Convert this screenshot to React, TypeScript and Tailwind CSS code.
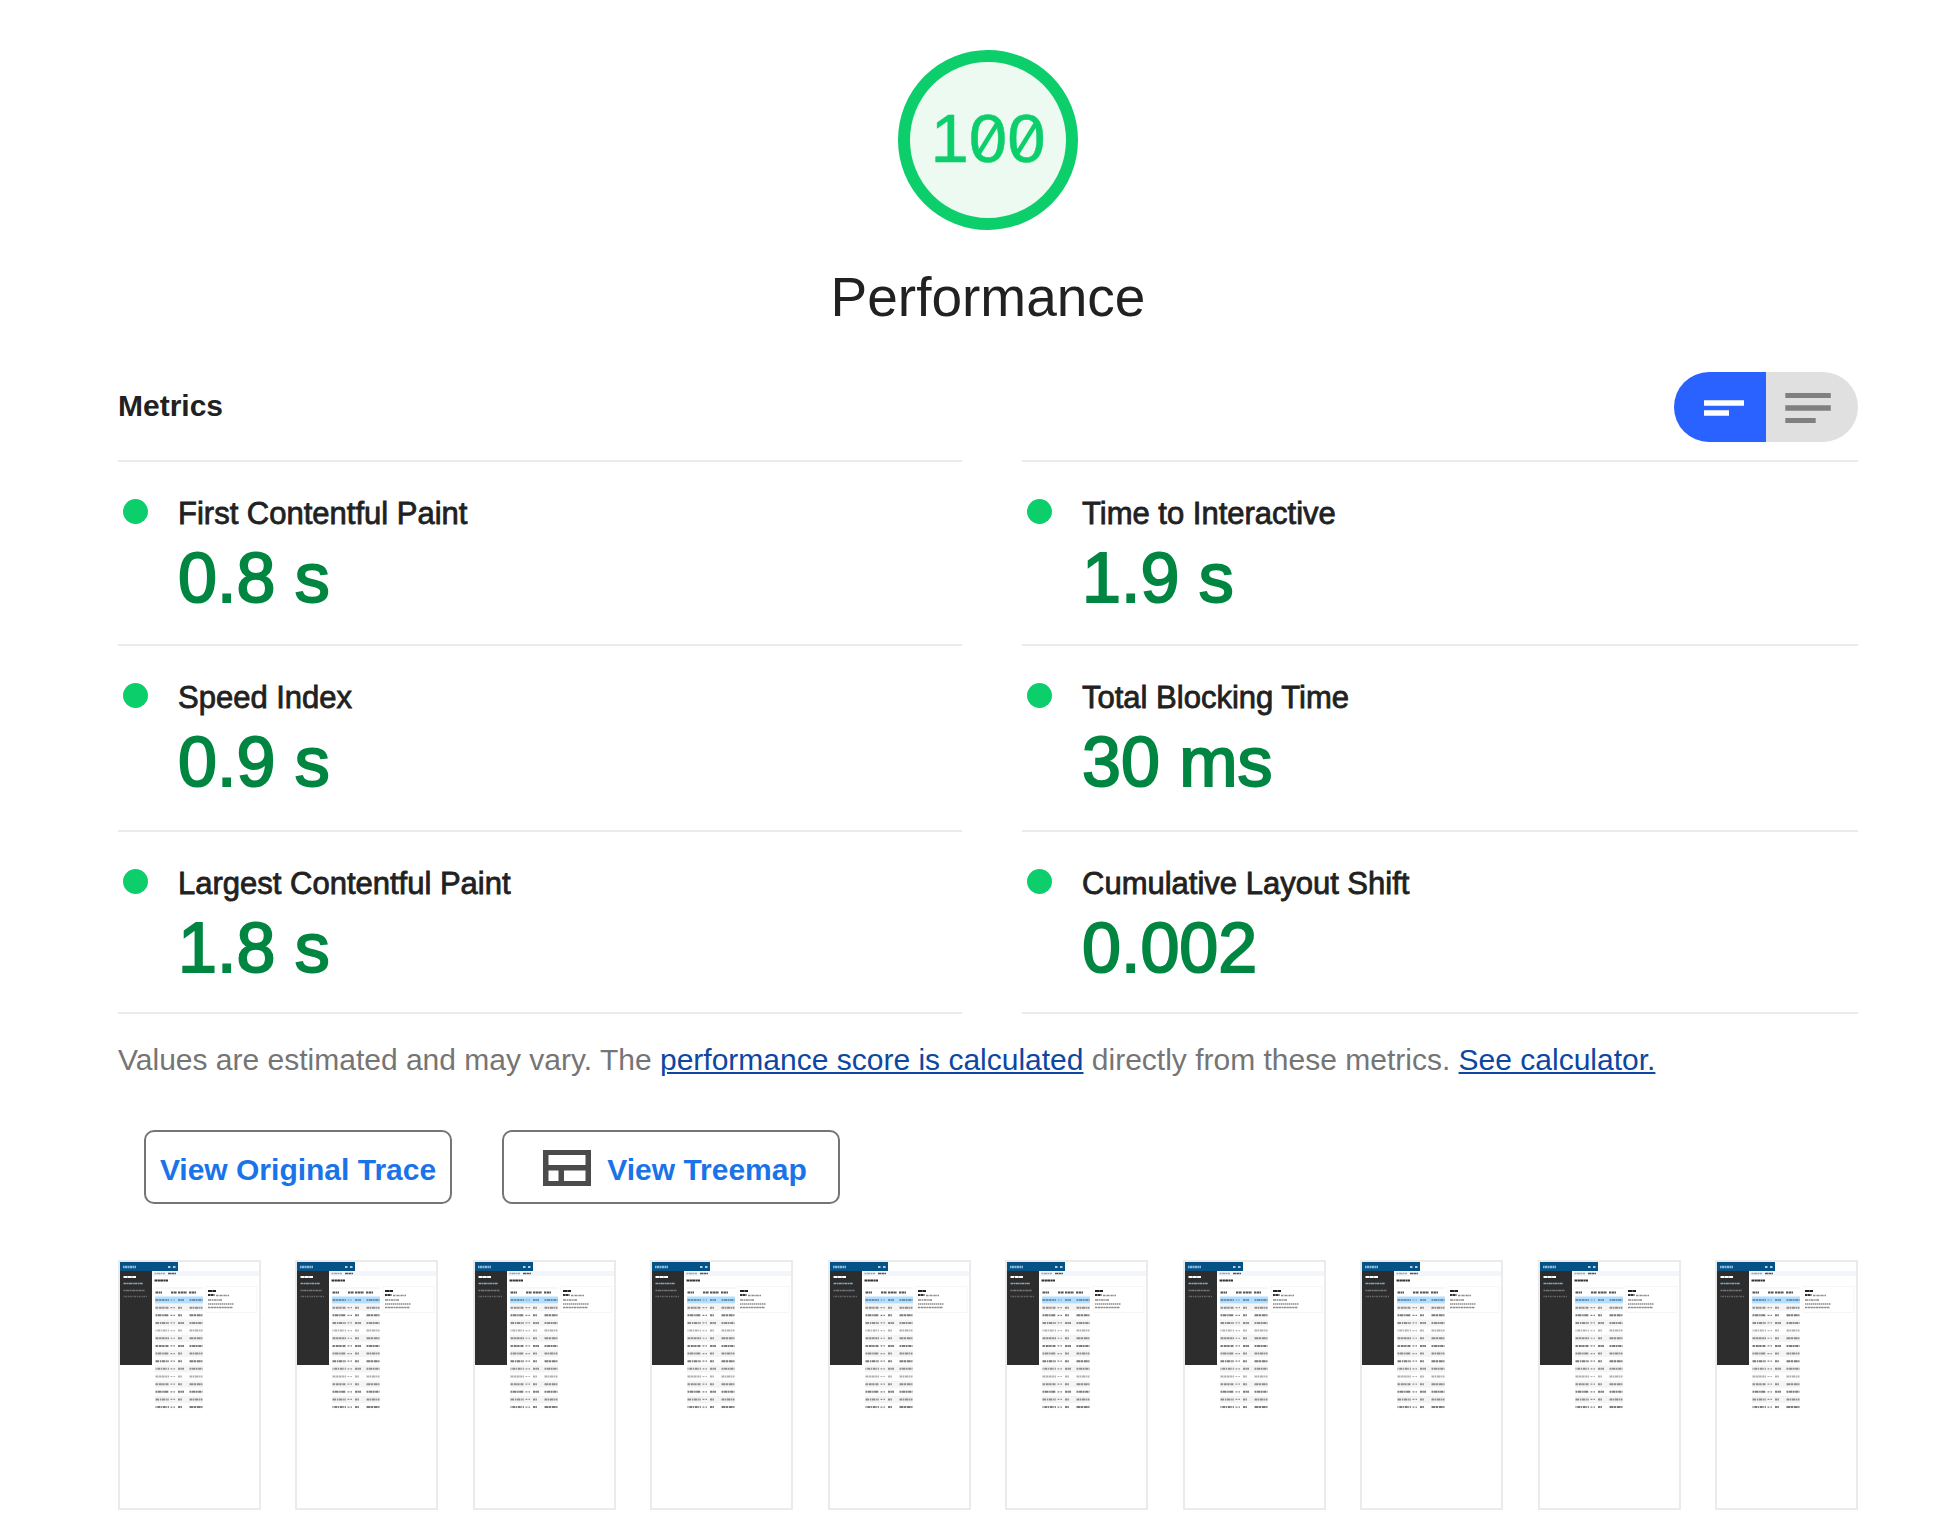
import { useState } from "react";

type Metric = { label: string; value: string };

const leftMetrics: Metric[] = [
  { label: "First Contentful Paint", value: "0.8 s" },
  { label: "Speed Index", value: "0.9 s" },
  { label: "Largest Contentful Paint", value: "1.8 s" },
];

const rightMetrics: Metric[] = [
  { label: "Time to Interactive", value: "1.9 s" },
  { label: "Total Blocking Time", value: "30 ms" },
  { label: "Cumulative Layout Shift", value: "0.002" },
];

function ScoreGauge() {
  return (
    <div className="relative flex size-[180px] items-center justify-center rounded-full border-12 border-[#0cce6b] bg-[#edfaf1] pb-1">
      <span className="text-[69px] leading-none text-[#0cce6b] [-webkit-text-stroke:0.5px_#0cce6b]">100</span>
      {/* slashes of the two zeros */}
      <svg className="absolute inset-0 size-full" viewBox="0 0 156 156" fill="none" stroke="#0cce6b" strokeWidth="4.500" aria-hidden="true">
        <path d="M69 91 L87 62 M107.500 91 L125.500 62" />
      </svg>
    </div>
  );
}

function ViewToggle() {
  const [expanded, setExpanded] = useState(false);
  return (
    <div className="flex h-[70px] w-[184px] overflow-hidden rounded-full">
      <button
        type="button"
        aria-label="Show metric values"
        aria-pressed={!expanded}
        onClick={() => setExpanded(false)}
        className="flex-1 bg-[#2962ff]"
      >
        <svg viewBox="0 0 92 70" fill="#ffffff" aria-hidden="true">
          <path d="M30 28.3h40v5.4H30zM30 38.3h25v5.4H30z" />
        </svg>
      </button>
      <button
        type="button"
        aria-label="Show metric descriptions"
        aria-pressed={expanded}
        onClick={() => setExpanded(true)}
        className="flex-1 bg-[#e0e0e0]"
      >
        <svg viewBox="0 0 92 70" fill="#808080" aria-hidden="true">
          <path d="M19.3 21h45.5v5H19.3zM19.3 33.3h45.5v5.4H19.3zM19.3 46h30.4v5H19.3z" />
        </svg>
      </button>
    </div>
  );
}

function MetricColumn({ metrics }: { metrics: Metric[] }) {
  return (
    <div className="grid grid-rows-[184px_186px_182px] border-b-2 border-[#ebebeb]">
      {metrics.map((m) => (
        <div key={m.label} className="flex border-t-2 border-[#ebebeb] pt-8 pl-[5px]">
          <span className="mt-[5px] mr-[30px] size-[25px] shrink-0 rounded-full bg-[#0cce6b]" />
          <div>
            <div className="text-[31px] leading-[40px] text-[#212121] [-webkit-text-stroke:0.8px_#212121]">{m.label}</div>
            <div className="mt-2 text-[70px] leading-[72px] text-[#018642] [-webkit-text-stroke:2px_#018642]">{m.value}</div>
          </div>
        </div>
      ))}
    </div>
  );
}

function TreemapIcon() {
  return (
    <svg className="h-9 w-12" viewBox="0 0 48 36" fill="#4b4b4b" aria-hidden="true">
      <path fillRule="evenodd" d="M0 0h48v36H0zM5.5 5v10h37V5zM5.5 20.5V31H15.500V20.5zM21 20.5V31h21.500V20.5z" />
    </svg>
  );
}

const rowCount = 15;
const firstDashes = ["3 .6 2 .5", "2.4 .8 3 .5", "1.5 .5 4 .7", "3.5 .8 1.5 .6", "1 .8 3 .6"];
const lastDashes = ["2 .6 3 .5", "3 .5 1.4 .6", "4 .5 2 .7"];

function PageShot() {
  return (
    <svg viewBox="0 0 139 246" className="block h-full w-full" preserveAspectRatio="xMinYMin meet" aria-hidden="true">
      <path fill="#f2f5f9" d="M32 9h107v5H32z" />
      <path fill="#055286" d="M0 0h58v9H0z" />
      <path fill="#2d2d2e" d="M0 9h32v94H0z" />
      <g fill="none" strokeWidth="2">
        <path stroke="#8db9d7" strokeWidth="2.600" strokeDasharray="1.500 .4 2.500 .4" d="M3 5H16" />
        <path stroke="#aed0e4" d="M48 5h2.500M53 5h2.500" />
        <path stroke="#ffffff" strokeDasharray="4 .3" d="M3.500 15H16" />
        <path stroke="#7fa9bf" strokeWidth="1.500" strokeDasharray="3 .5 1.500 .4" d="M3.500 21.500H23" />
        <path stroke="#777777" strokeWidth="1.500" strokeDasharray="2 .6 3 .5" d="M3.500 28.500H25" />
        <path stroke="#666666" strokeWidth="1.500" strokeDasharray="1 .7 2 .8" d="M3.500 34.500H27" />
        <path stroke="#9ba5b4" strokeWidth="1.500" strokeDasharray="2 .5 3 .4" d="M34.500 11.500H45" />
        <path stroke="#555555" strokeWidth="1.500" strokeDasharray="3 .4" d="M48 11.500H56" />
        <path stroke="#333333" strokeDasharray="3 .4 2 .3" d="M34.500 18.500H48" />
        <path stroke="#eeeeee" strokeWidth="1" d="M34.500 26H83" />
        <path stroke="#555555" strokeDasharray="2.500 .5 2 .4" d="M35.500 30.500H42M51 30.500h6M58 30.500h9M69 30.500h7" />
      </g>
      {Array.from({ length: rowCount }, (_, i) => {
        const y = 38 + i * 7.65;
        const fade = i === 4 || i === 10 ? "#b0b0b0" : i % 2 ? "#8f8f8f" : "#7c7c7c";
        return (
          <g key={i} fill="none" strokeWidth="2" stroke={i === 0 ? "#6c93ab" : fade}>
            <rect x="35" y={y - 3.5} width="48" height="7" stroke="none" fill={i === 0 ? "#b3deff" : i % 2 ? "#f4f4f4" : "#fdfdfd"} />
            <path strokeDasharray={firstDashes[i % 5]} d={`M35.500 ${y}H49`} />
            <path strokeDasharray="1.500 .6 .8 .5" d={`M50.500 ${y}H55`} strokeWidth="1.200" />
            <path strokeDasharray="2 .4 1.500 .3" d={`M58 ${y}H${i % 3 === 0 ? 64 : i === 9 ? 59 : 62}`} />
            <path strokeDasharray={lastDashes[i % 3]} d={`M69.500 ${y}H82.500`} />
          </g>
        );
      })}
      <rect x="86" y="24.500" width="51" height="26" fill="#ffffff" stroke="#f4f4f4" strokeWidth=".8" />
      <g fill="none" stroke="#8a8a8a" strokeWidth="1.500">
        <path stroke="#222222" strokeWidth="2" strokeDasharray="4.500 .3" d="M88 29h8" />
        <path stroke="#333333" strokeWidth="2" strokeDasharray="2.500 .4" d="M88 33h6.500" />
        <path strokeDasharray="2 .5 1 .4" d="M96 33.500h13" />
        <path strokeDasharray="3 .6 1.500 .5" d="M88 38h14" />
        <path strokeDasharray="1 .5 2 .5" d="M88 42h26" />
        <path strokeDasharray="2.500 .5 2 .4" d="M88 45.500h25" />
      </g>
    </svg>
  );
}

export default function App() {
  return (
    <main className="min-h-screen bg-white pt-[50px] pr-[102px] pb-[30px] pl-[118px] font-['Liberation_Sans',Arial,sans-serif] text-[#212121]">
      <header className="flex flex-col items-center">
        <ScoreGauge />
        <h1 className="mt-[35px] text-[55px] leading-[64px]">Performance</h1>
      </header>

      <section>
        <div className="mt-[43px] flex items-center justify-between">
          <h2 className="pb-0.5 text-[30px] leading-[40px] font-bold">Metrics</h2>
          <ViewToggle />
        </div>
        <div className="mt-[18px] grid grid-cols-[844fr_836fr] gap-x-[60px]">
          <MetricColumn metrics={leftMetrics} />
          <MetricColumn metrics={rightMetrics} />
        </div>
      </section>

      <p className="mt-[26px] text-[30px] leading-[40px] text-[#757575]">
        Values are estimated and may vary. The{" "}
        <a href="#scoring" className="text-[#0d47a1] underline decoration-2 underline-offset-2">performance score is calculated</a>{" "}
        directly from these metrics.{" "}
        <a href="#calculator" className="text-[#0d47a1] underline decoration-2 underline-offset-2">See calculator.</a>
      </p>

      <div className="mt-[50px] flex gap-[50px] pl-[26px] text-[30px] leading-[40px] font-bold text-[#1a73e8]">
        <button type="button" className="flex h-[74px] w-[308px] items-center justify-center rounded-[10px] border-2 border-[#757575] pt-1.5 whitespace-nowrap">
          View Original Trace
        </button>
        <button type="button" className="flex h-[74px] w-[338px] items-center justify-center gap-4 rounded-[10px] border-2 border-[#757575] pt-1.5 pl-2 whitespace-nowrap">
          <span className="pb-1">
            <TreemapIcon />
          </span>
          View Treemap
        </button>
      </div>

      <ul className="mt-14 flex justify-between" aria-label="Load filmstrip">
        {Array.from({ length: 10 }, (_, i) => (
          <li key={i} className="h-[250px] w-[143px] border-2 border-[#ebebeb]">
            <PageShot />
          </li>
        ))}
      </ul>
    </main>
  );
}
